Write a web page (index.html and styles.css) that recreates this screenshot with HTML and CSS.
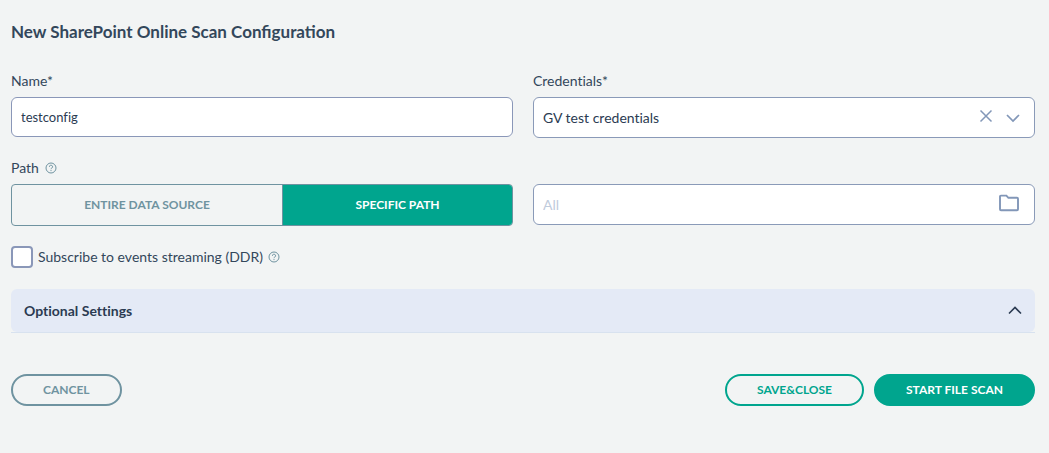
FILE: index.html
```html
<!DOCTYPE html>
<html lang="en">
<head>
<meta charset="utf-8">
<title>New SharePoint Online Scan Configuration</title>
<link rel="stylesheet" href="styles.css">
</head>
<body>
<form class="scan-form">
  <h1 class="title">New SharePoint Online Scan Configuration</h1>

  <div class="grid">
    <div class="field">
      <label class="label" for="name">Name*</label>
      <input class="text-input" id="name" type="text" value="testconfig">
    </div>

    <div class="field">
      <label class="label" for="credentials">Credentials*</label>
      <div class="control">
        <select class="control-input" id="credentials">
          <option selected>GV test credentials</option>
        </select>
        <button class="icon-button" type="button" aria-label="Clear credentials">
          <svg width="14" height="14" viewBox="0 0 14 14" fill="none" stroke="currentColor" stroke-width="1.5"><path d="M1.5 1.5l11 11M12.5 1.5l-11 11"/></svg>
        </button>
        <svg class="chevron" width="14" height="14" viewBox="0 0 14 14" fill="none" stroke="currentColor" stroke-width="1.7" aria-hidden="true"><path d="M1 4l6 6 6-6"/></svg>
      </div>
    </div>

    <div class="field">
      <div class="label" id="path-label">Path
        <svg class="help" width="12" height="12" viewBox="0 0 12 12" fill="none" stroke="currentColor" aria-hidden="true"><circle cx="6" cy="6" r="5"/><path d="M4.4 4.8a1.6 1.5 0 1 1 2.4 1.2c-.5.3-.8.6-.8 1.2M6 8.1v1"/></svg>
      </div>
      <div class="segmented" role="group" aria-labelledby="path-label">
        <button class="segment segment-entire" type="button" aria-pressed="false">ENTIRE DATA SOURCE</button>
        <button class="segment segment-active" type="button" aria-pressed="true">SPECIFIC PATH</button>
      </div>
    </div>

    <div class="field field-bare">
      <div class="control">
        <input class="control-input" type="text" placeholder="All" aria-label="Specific path">
        <button class="icon-button" type="button" aria-label="Browse folders">
          <svg width="22" height="18" viewBox="0 0 22 18" fill="none" stroke="currentColor" stroke-width="1.9"><path d="M2 2.6q0-1 1-1h5.4l2 2.2H19q1 0 1 1v10.4q0 1-1 1H3q-1 0-1-1z"/></svg>
        </button>
      </div>
    </div>
  </div>

  <div class="subscribe">
    <input class="checkbox" id="ddr" type="checkbox">
    <label for="ddr">Subscribe to events streaming (DDR)</label>
    <svg class="help" width="12" height="12" viewBox="0 0 12 12" fill="none" stroke="currentColor" aria-hidden="true"><circle cx="6" cy="6" r="5"/><path d="M4.4 4.8a1.6 1.5 0 1 1 2.4 1.2c-.5.3-.8.6-.8 1.2M6 8.1v1"/></svg>
  </div>

  <div class="accordion">
    <button class="accordion-header" type="button" aria-expanded="true">
      <span>Optional Settings</span>
      <svg width="14" height="14" viewBox="0 0 14 14" fill="none" stroke="currentColor" stroke-width="1.6" aria-hidden="true"><path d="M1 9.5l6-6 6 6"/></svg>
    </button>
  </div>

  <div class="actions">
    <button class="button button-cancel" type="button">CANCEL</button>
    <button class="button button-outline" type="button">SAVE&amp;CLOSE</button>
    <button class="button button-primary" type="submit">START FILE SCAN</button>
  </div>
</form>
</body>
</html>
```
FILE: styles.css
```css
* {
  box-sizing: border-box;
}

body {
  margin: 0;
  background: #f2f4f4;
  color: #33475b;
  font: 14px/20px Lato, sans-serif;
  font-variant-ligatures: none;
}

button,
input,
select {
  font: inherit;
  font-variant-ligatures: none;
  color: inherit;
}

button {
  cursor: pointer;
}

svg {
  flex: none;
}

.scan-form {
  padding: 20px 14px 24px 11px;
}

.title {
  margin: 0 0 27px;
  font-size: 17px;
  line-height: 24px;
  font-weight: 700;
  font-variant-ligatures: normal;
}

.grid {
  display: grid;
  grid-template-columns: 1fr 1fr;
  gap: 20px;
}

.field {
  display: flex;
  flex-direction: column;
  gap: 6px;
}

.field-bare {
  padding-top: 26px;
}

.label {
  display: flex;
  align-items: center;
  gap: 6px;
}

.help {
  color: #6f93a0;
}

.text-input {
  height: 40px;
  padding: 0 9px;
  border: 1px solid #8a97b8;
  border-radius: 6px;
  background: #fff;
  color: #2b3b52;
  font-size: 13px;
}

.control {
  display: flex;
  align-items: center;
  height: 41px;
  padding-right: 14px;
  border: 1px solid #8a9ab8;
  border-radius: 6px;
  background: #fff;
}

.control-input {
  flex: 1;
  min-width: 0;
  height: 100%;
  padding: 0 9px;
  border: 0;
  border-radius: 6px;
  background: transparent;
  color: #2b3b52;
  appearance: none;
}

.control-input::placeholder {
  color: #c0cbdc;
}

.icon-button {
  display: flex;
  padding: 0 0 4px;
  border: 0;
  background: none;
  color: #8297b8;
}

.chevron {
  margin-left: 13px;
  color: #8297b8;
}

.segmented {
  display: grid;
  grid-template-columns: 271fr 229fr;
  height: 42px;
  border: 1px solid #6f93a0;
  border-radius: 4px;
}

.segment {
  padding: 0;
  border: 0;
  background: none;
  font-size: 12px;
  font-weight: 700;
}

.segment-entire {
  border-right: 1px solid #6f93a0;
  color: #6f93a0;
}

.segment-active {
  border-radius: 0 3px 3px 0;
  background: #00a58e;
  color: #fff;
}

.subscribe {
  display: flex;
  align-items: center;
  gap: 5px;
  margin-top: 20px;
}

.checkbox {
  width: 22px;
  height: 22px;
  margin: 0;
  border: 2px solid #8a97b8;
  border-radius: 4px;
  background: #fff;
  appearance: none;
}

.checkbox:checked {
  background: #00a58e;
}

.accordion {
  margin-top: 21px;
  border-bottom: 1px solid #d8e2ef;
}

.accordion-header {
  display: flex;
  align-items: center;
  justify-content: space-between;
  width: 100%;
  height: 43px;
  padding: 0 13px;
  border: 0;
  border-radius: 6px;
  background: #e4eaf6;
  color: #2b3b52;
  font-weight: 700;
}

.actions {
  display: flex;
  gap: 10px;
  margin-top: 41px;
}

.button {
  height: 32px;
  padding: 0 30px;
  border: 2px solid #00a58e;
  border-radius: 16px;
  background: none;
  color: #00a58e;
  font-size: 12px;
  line-height: 16px;
  font-weight: 700;
}

.button-cancel {
  margin-right: auto;
  border-color: #6f93a0;
  color: #6f93a0;
}

.button-primary {
  background: #00a58e;
  color: #fff;
}
```
